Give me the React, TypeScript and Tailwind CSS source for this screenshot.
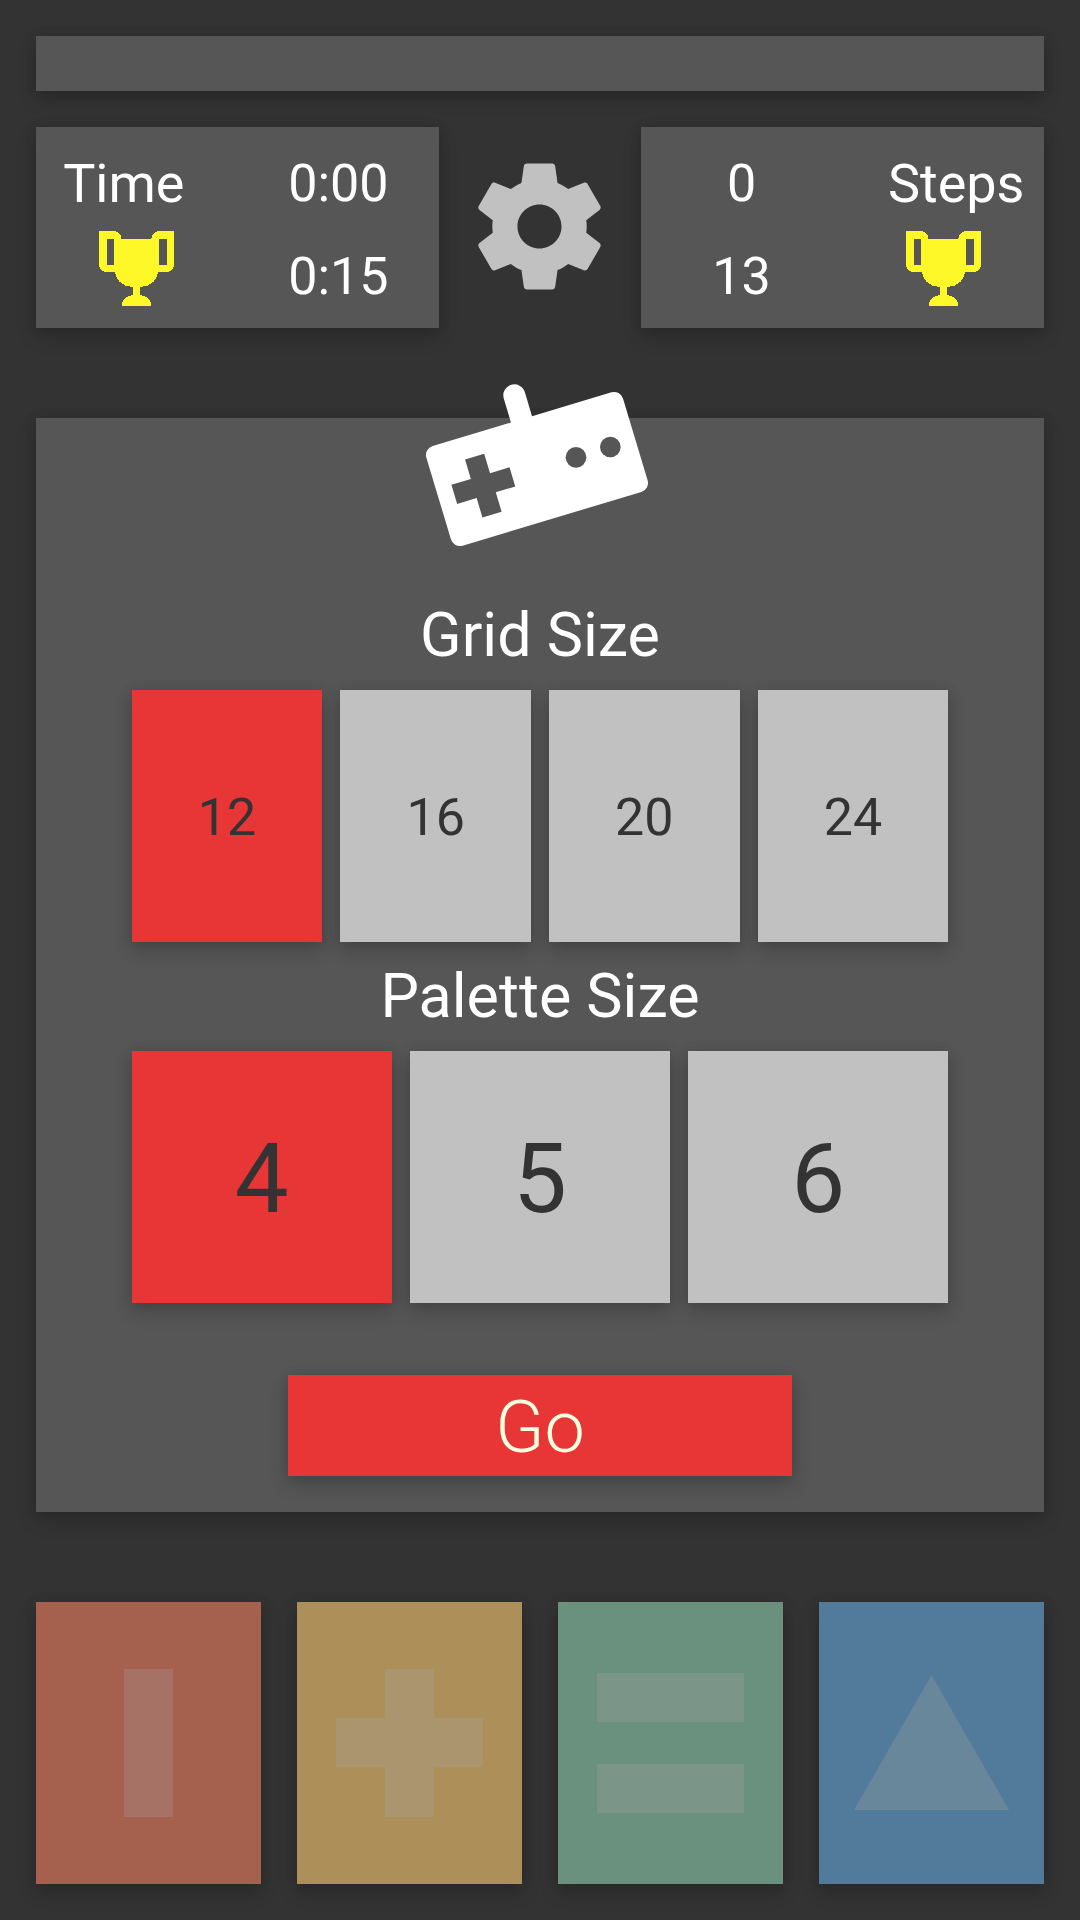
import { useState, type ReactNode } from "react";

const shadow = "shadow-[0_8px_18px_rgba(0,0,0,0.2),0_0_12px_rgba(0,0,0,0.08)]";

function Trophy() {
  return (
    <svg viewBox="2 2 20 20" className="mb-4 size-[75px] fill-[#fff829]" shapeRendering="crispEdges" role="img" aria-label="Best">
      <path d="M20.2 2H18C17.1 2 16 3 16 4H8C8 3 6.9 2 6 2H2v9c0 1 1 2 2 2h2.2c.4 2 1.7 3.7 4.8 4v2.08C8 19.54 8 22 8 22h8s0-2.46-3-2.92V17c3.1-.3 4.4-2 4.8-4H20c1 0 2-1 2-2V2h-1.8M4 11V4h2v7H4m16 0h-2V4h2v7Z" />
    </svg>
  );
}

function Gear() {
  return (
    <svg viewBox="0 0 24 24" className="size-[151px] fill-[#c1c1c1]" aria-hidden="true">
      <path d="M19.43 12.98c.04-.32.07-.64.07-.98s-.03-.66-.07-.98l2.11-1.65c.19-.15.24-.42.12-.64l-2-3.46c-.12-.22-.39-.3-.61-.22l-2.49 1c-.52-.4-1.08-.73-1.69-.98l-.38-2.65C14.46 2.18 14.25 2 14 2h-4c-.25 0-.46.18-.49.42l-.38 2.65c-.61.25-1.17.59-1.69.98l-2.49-1c-.23-.09-.49 0-.61.22l-2 3.46c-.13.22-.07.49.12.64l2.11 1.65c-.04.32-.07.65-.07.98s.03.66.07.98l-2.11 1.65c-.19.15-.24.42-.12.64l2 3.46c.12.22.39.3.61.22l2.49-1c.52.4 1.08.73 1.69.98l.38 2.65c.03.24.24.42.49.42h4c.25 0 .46-.18.49-.42l.38-2.65c.61-.25 1.17-.59 1.69-.98l2.49 1c.23.09.49 0 .61-.22l2-3.46c.12-.22.07-.49-.12-.64l-2.11-1.65zM12 15.5c-1.93 0-3.5-1.57-3.5-3.5s1.57-3.5 3.5-3.5 3.5 1.57 3.5 3.5-1.57 3.5-3.5 3.5z" />
    </svg>
  );
}

function Gamepad() {
  return (
    <svg viewBox="0 0 840 600" className="-mt-[58px] mb-[21px] h-[200px] w-[280px]" role="img" aria-label="Game">
      <path d="M343 106L368 190" stroke="#fff" strokeWidth="66" strokeLinecap="round" />
      <rect x="103" y="171" width="616" height="312" rx="28" fill="#fff" transform="rotate(-16.7 411 327)" />
      <path d="M220 286h60v61h61v60h-61v61h-60v-61h-61v-60h61z" fill="#565656" transform="rotate(-16.7 250 377)" />
      <circle cx="528" cy="292" r="31" fill="#565656" />
      <circle cx="631" cy="261" r="31" fill="#565656" />
    </svg>
  );
}

function Options({ title, values, cols, textSize }: { title: string; values: number[]; cols: string; textSize: string }) {
  const [selected, setSelected] = useState(values[0]);
  return (
    <section className="w-[81%]">
      <h2 className="text-center text-[61px] leading-[109px] text-white">{title}</h2>
      <div className={`grid gap-[18px] ${cols}`}>
        {values.map((value) => (
          <button
            key={value}
            type="button"
            aria-pressed={value === selected}
            onClick={() => setSelected(value)}
            className={`h-[252px] pt-1 text-[#333] ${textSize} ${shadow} ${value === selected ? "bg-[#e83535]" : "bg-[#c1c1c1]"}`}
          >
            {value}
          </button>
        ))}
      </div>
    </section>
  );
}

function Tile({ label, className, children }: { label: string; className: string; children: ReactNode }) {
  return (
    <button type="button" aria-label={label} className={`flex h-[282px] items-center justify-center ${shadow} ${className}`}>
      <svg viewBox="0 0 225 282" className="h-full w-full" aria-hidden="true">
        {children}
      </svg>
    </button>
  );
}

const stat = "grid grid-cols-2 auto-rows-[93px] items-center justify-items-center bg-[#565656] pt-2.5 pb-1 text-[52px] leading-none text-white";

export default function App() {
  return (
    <main className="flex min-h-screen flex-col bg-[#333] p-9 font-['Roboto',sans-serif]">
      <div className={`h-[55px] bg-[#565656] ${shadow}`} />

      <header className="mt-9 grid h-[201px] grid-cols-[2fr_1fr_2fr]">
        <div className={`${stat} ${shadow}`}>
          <span className="pr-[26px] text-[54px]">Time</span>
          <span>0:00</span>
          <Trophy />
          <span>0:15</span>
        </div>
        <button type="button" aria-label="Settings" className="flex items-center justify-center pb-0.5">
          <Gear />
        </button>
        <div className={`${stat} ${shadow}`}>
          <span>0</span>
          <span className="pl-[26px] text-[54px]">Steps</span>
          <span>13</span>
          <Trophy />
        </div>
      </header>

      <div className={`mt-[90px] flex flex-col items-center bg-[#565656] pb-9 ${shadow}`}>
        <Gamepad />
        <Options title="Grid Size" values={[12, 16, 20, 24]} cols="grid-cols-4" textSize="text-[52px]" />
        <Options title="Palette Size" values={[4, 5, 6]} cols="grid-cols-3" textSize="text-[96px]" />
        <button type="button" className={`mt-[72px] h-[101px] w-1/2 bg-[#e83535] pt-1 text-[72px] leading-none font-light text-[#f8ffdf] ${shadow}`}>
          Go
        </button>
      </div>

      <footer className="mt-[90px] grid grid-cols-4 gap-9">
        <Tile label="Bar" className="bg-[#a5604e]">
          <path d="M88 67h49v148H88z" fill="#a67265" />
        </Tile>
        <Tile label="Plus" className="bg-[#ad8f5a]">
          <path d="M88 67h49v49h49v49h-49v50H88v-50H39v-49h49z" fill="#aa956f" />
        </Tile>
        <Tile label="Equals" className="bg-[#69917e]">
          <path d="M39 71h147v49H39zM39 162h147v49H39z" fill="#7b9688" />
        </Tile>
        <Tile label="Triangle" className="bg-[#527b9b]">
          <path d="M112.500 73L190 208H35z" fill="#68879b" />
        </Tile>
      </footer>
    </main>
  );
}
